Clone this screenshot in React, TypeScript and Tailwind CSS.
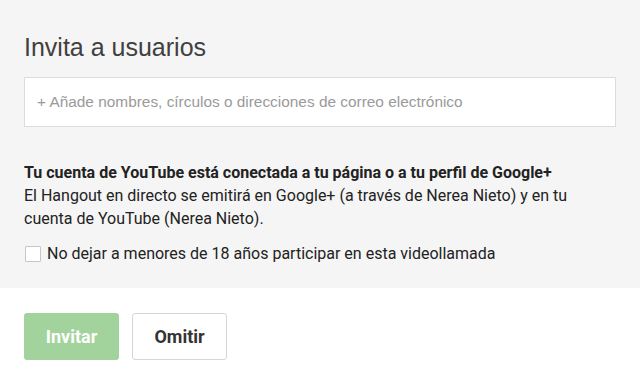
export default function App() {
  return (
    <div className="w-[640px] h-[388px] bg-white overflow-hidden">
      <div className="bg-[#f5f5f5] px-6 pt-[32px] h-[288px]">
        <h1 className="text-[25px] leading-[30px] text-[#404040] [font-family:'Liberation_Sans',Arial,sans-serif]">
          Invita a usuarios
        </h1>
        <div className="mt-[15px] h-[50px] w-[592px] bg-white border border-[#dcdcdc] flex items-center px-3">
          <span className="text-[15.4px] text-[#9a9a9a] [font-family:'Liberation_Sans',Arial,sans-serif]">
            + Añade nombres, círculos o direcciones de correo electrónico
          </span>
        </div>
        <div className="mt-[34px] text-[16px] leading-[23px] text-[#222] [font-family:Roboto,sans-serif]">
          <p className="font-bold">Tu cuenta de YouTube está conectada a tu página o a tu perfil de Google+</p>
          <p>El Hangout en directo se emitirá en Google+ (a través de Nerea Nieto) y en tu</p>
          <p>cuenta de YouTube (Nerea Nieto).</p>
        </div>
        <label className="mt-[12px] flex items-center gap-[6px] text-[16px] text-[#222] [font-family:Roboto,sans-serif]">
          <span className="w-[16px] h-[16px] border border-[#c6c6c6] bg-white rounded-[1px] ml-[1px]" />
          <span>No dejar a menores de 18 años participar en esta videollamada</span>
        </label>
      </div>
      <div className="flex gap-[13px] px-6 pt-[25px]">
        <button className="w-[95px] h-[47px] rounded-[3px] bg-[#a3d39c] text-white font-bold text-[18px] [font-family:Roboto,sans-serif]">
          Invitar
        </button>
        <button className="w-[95px] h-[47px] rounded-[3px] bg-white border border-[#d6d6d6] text-[#333] font-bold text-[18px] [font-family:Roboto,sans-serif]">
          Omitir
        </button>
      </div>
    </div>
  );
}
